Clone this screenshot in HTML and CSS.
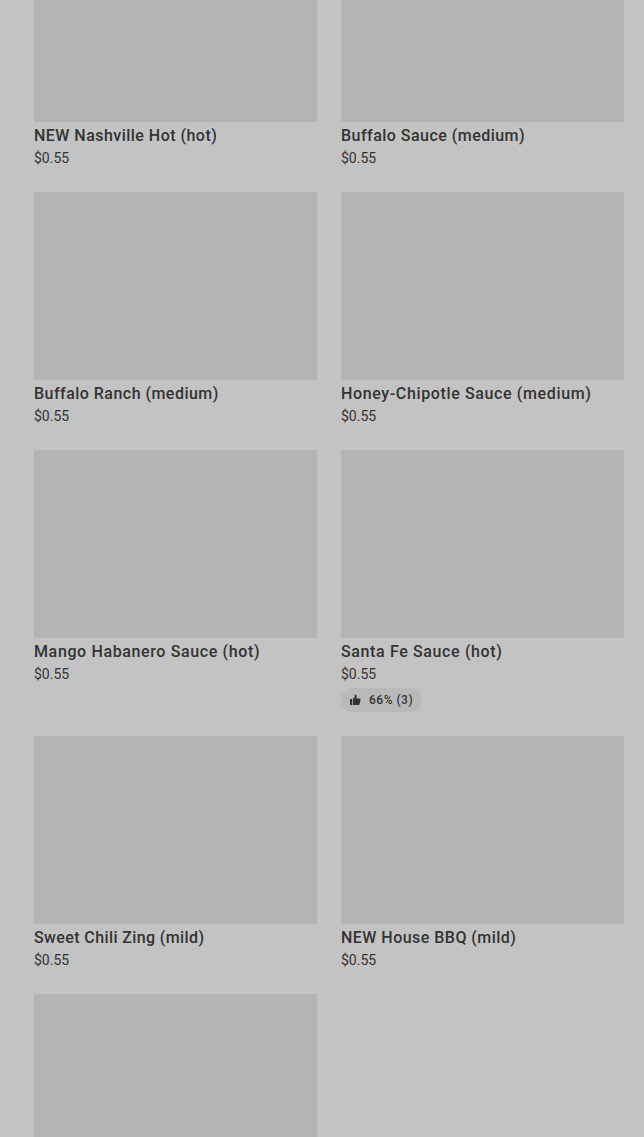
FILE: index.html
```html
<!DOCTYPE html>
<html lang="en">
<head>
    <meta charset="UTF-8">
    <meta name="viewport" content="width=device-width, initial-scale=1.0">
    <title>Sauces</title>
    <link rel="stylesheet" href="styles.css">
</head>
<body>

    <div class="menu-grid">
        <div class="menu-item">
            <div class="item-photo"></div>
            <h3 class="item-name">NEW Nashville Hot (hot)</h3>
            <p class="item-price">$0.55</p>
        </div>
        <div class="menu-item">
            <div class="item-photo"></div>
            <h3 class="item-name">Buffalo Sauce (medium)</h3>
            <p class="item-price">$0.55</p>
        </div>
        <div class="menu-item">
            <div class="item-photo"></div>
            <h3 class="item-name">Buffalo Ranch (medium)</h3>
            <p class="item-price">$0.55</p>
        </div>
        <div class="menu-item">
            <div class="item-photo"></div>
            <h3 class="item-name wide">Honey-Chipotle Sauce (medium)</h3>
            <p class="item-price">$0.55</p>
        </div>
        <div class="menu-item">
            <div class="item-photo"></div>
            <h3 class="item-name wide">Mango Habanero Sauce (hot)</h3>
            <p class="item-price">$0.55</p>
        </div>
        <div class="menu-item">
            <div class="item-photo"></div>
            <h3 class="item-name wide">Santa Fe Sauce (hot)</h3>
            <p class="item-price">$0.55</p>
            <div class="rating">
                <svg class="thumb-icon" viewBox="0 0 12 12" width="12" height="12">
                    <path d="M1 5h2v6H1zM3.800 5L5.700 3V.800C7.200.500 7.900 1.200 7.800 2.300L7.500 4.500H11.500V6.300L10.300 11H3.800z"/>
                </svg>
                <span>66% (3)</span>
            </div>
        </div>
        <div class="menu-item">
            <div class="item-photo"></div>
            <h3 class="item-name narrow">Sweet Chili Zing (mild)</h3>
            <p class="item-price">$0.55</p>
        </div>
        <div class="menu-item">
            <div class="item-photo"></div>
            <h3 class="item-name">NEW House BBQ (mild)</h3>
            <p class="item-price">$0.55</p>
        </div>
        <div class="menu-item">
            <div class="item-photo"></div>
        </div>
    </div>

</body>
</html>
```
FILE: styles.css
```css
body {
    margin: 0;
    height: 1137px;
    overflow: hidden;
    font-family: Roboto, "Liberation Sans", sans-serif;
    background-color: #c3c3c3;
    color: #333;
}

/* Two column list, scrolled part way down */
.menu-grid {
    display: grid;
    grid-template-columns: 283px 283px;
    column-gap: 24px;
    row-gap: 24px;
    margin: -66px 0 0 34px;
}

.item-photo {
    height: 188px;
    background-color: #b4b4b4;
}

.item-name {
    margin: 2px 0 0;
    font-size: 16px;
    line-height: 24px;
    font-weight: 500;
    letter-spacing: 0.47px;
    white-space: nowrap;
}

.item-name.wide {
    letter-spacing: 0.63px;
}

.item-name.narrow {
    letter-spacing: 0.39px;
}

.item-price {
    margin: 0;
    font-size: 14px;
    line-height: 20px;
}

/* Thumbs up badge */
.rating {
    display: flex;
    align-items: center;
    gap: 8px;
    box-sizing: border-box;
    width: 81px;
    height: 24px;
    margin-top: 4px;
    padding-left: 8px;
    border-radius: 12px;
    background-color: #b9b9b9;
    font-size: 12px;
    font-weight: 500;
    letter-spacing: 0.5px;
    white-space: nowrap;
}

.thumb-icon {
    fill: #333;
}
```
